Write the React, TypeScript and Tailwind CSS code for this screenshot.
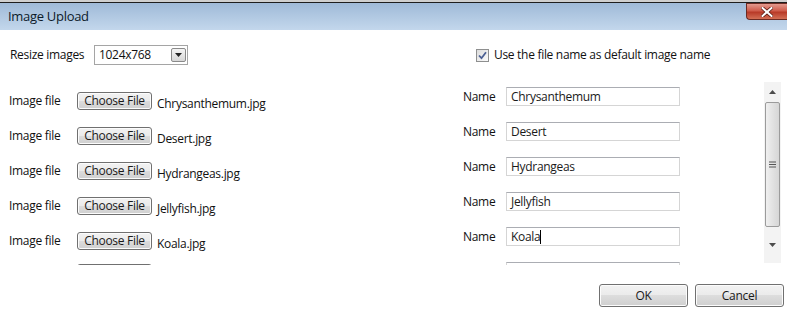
import React from 'react';

const files = [
  { file: 'Chrysanthemum.jpg', name: 'Chrysanthemum' },
  { file: 'Desert.jpg', name: 'Desert' },
  { file: 'Hydrangeas.jpg', name: 'Hydrangeas' },
  { file: 'Jellyfish.jpg', name: 'Jellyfish' },
  { file: 'Koala.jpg', name: 'Koala' },
  { file: '', name: '' },
];

const Win7Button = ({ label, className }: { label: string; className: string }) => (
  <div
    className={`flex items-center justify-center rounded-[3px] border border-[#707070] bg-[linear-gradient(#f2f2f2_0%,#ebebeb_49%,#dddddd_50%,#cfcfcf_100%)] shadow-[inset_0_0_0_1px_#fcfcfc] text-[#1a1a1a] ${className}`}
  >
    {label}
  </div>
);

const TextBox = ({ value, caret }: { value: string; caret?: boolean }) => (
  <div className="flex items-center w-[174px] h-[19px] border border-[#d5d5d5] border-t-[#abadb3] bg-white pl-[4px] text-[#1a1a1a]">
    {value}
    {caret && <span className="inline-block w-px h-[14px] bg-black" />}
  </div>
);

export default function App() {
  return (
    <div className="w-[787px] h-[329px] bg-white overflow-hidden relative font-['Open_Sans',sans-serif] text-[12px] tracking-[-0.3px] text-[#111]">
      {/* Window frame top + caption */}
      <div className="h-[2px] bg-[#cfcfcf]" />
      <div className="h-[1px] bg-[#1e1e1e]" />
      <div className="h-[27px] bg-[linear-gradient(#9fbad8,#c3d7ec)] flex items-center pl-[8px] text-[13px] text-[#0c1a2a]">
        Image Upload
      </div>
      <div className="absolute right-0 top-[3px] w-[41px] h-[17px] rounded-bl-[4px] border border-[#6b2a22] border-r-0 bg-[linear-gradient(#e39a8e_0%,#cf5c4b_45%,#b83a28_55%,#d36f55_100%)] flex items-center justify-center">
        <svg width="12" height="10" viewBox="0 0 12 10">
          <path d="M1.5 1 L10.5 9 M10.5 1 L1.5 9" stroke="#5a1b12" strokeWidth="3.6" strokeLinecap="square" />
          <path d="M1.5 1 L10.5 9 M10.5 1 L1.5 9" stroke="#ffffff" strokeWidth="2" strokeLinecap="square" />
        </svg>
      </div>

      {/* Options row */}
      <div className="flex items-center h-[20px] mt-[15px]">
        <span className="ml-[10px] w-[84px]">Resize images</span>
        <div className="flex items-center justify-between w-[94px] h-[20px] border border-[#a5a5a5] bg-white pl-[4px] pr-[1px]">
          <span>1024x768</span>
          <div className="w-[15px] h-[14px] border border-[#8a8a8a] rounded-[2px] bg-[linear-gradient(#f4f4f4,#d6d6d6)] flex items-center justify-center">
            <svg width="7" height="4" viewBox="0 0 7 4">
              <path d="M0 0 H7 L3.5 4 Z" fill="#222" />
            </svg>
          </div>
        </div>
        <div className="ml-[288px] flex items-center">
          <div className="w-[13px] h-[13px] border border-[#8e8f8f] bg-[linear-gradient(135deg,#dcdcdc,#fbfbfb)] flex items-center justify-center">
            <svg width="9" height="9" viewBox="0 0 9 9">
              <path d="M1 4.5 L3.5 7.2 L8 1.2" stroke="#4b5f93" strokeWidth="1.8" fill="none" />
            </svg>
          </div>
          <span className="ml-[5px]">Use the file name as default image name</span>
        </div>
      </div>

      {/* Scroll area */}
      <div className="mt-[15px] h-[185px] flex overflow-hidden">
        <div className="w-[455px] pt-[12px]">
          {files.map((f, i) => (
            <div key={i} className={`${i === 4 ? 'h-[32px]' : 'h-[35px]'} flex`}>
              <span className="ml-[9px] w-[68px] h-[18px] flex items-center">{f.file ? 'Image file' : ''}</span>
              <Win7Button label={f.file ? 'Choose File' : ''} className="w-[75px] h-[18px]" />
              <span className="ml-[5px] mt-[3px] h-[18px] flex items-center">{f.file}</span>
            </div>
          ))}
        </div>
        <div className="w-[230px] pt-[7px]">
          {files.map((f, i) => (
            <div key={i} className="h-[35px] flex">
              <span className="ml-[8px] w-[43px] h-[19px] flex items-center">{f.name ? 'Name' : ''}</span>
              <TextBox value={f.name} caret={i === 4} />
            </div>
          ))}
        </div>
        <div className="ml-[79px] mt-[2px] w-[17px] h-[181px] bg-[#f3f3f3] flex flex-col items-center">
          <div className="h-[20px] w-full flex items-center justify-center">
            <svg width="7" height="4" viewBox="0 0 7 4">
              <path d="M0 4 H7 L3.5 0 Z" fill="#4d4d4d" />
            </svg>
          </div>
          <div className="w-[15px] h-[125px] rounded-[2px] border border-[#9b9b9b] bg-[linear-gradient(90deg,#f0f0f0,#e2e2e2_50%,#d6d6d6)] flex items-center justify-center">
            <svg width="7" height="7" viewBox="0 0 7 7">
              <path d="M0 1 H7 M0 3.5 H7 M0 6 H7" stroke="#555" strokeWidth="1" />
            </svg>
          </div>
          <div className="flex-1 w-full flex items-center justify-center">
            <svg width="7" height="4" viewBox="0 0 7 4">
              <path d="M0 0 H7 L3.5 4 Z" fill="#4d4d4d" />
            </svg>
          </div>
        </div>
      </div>

      {/* Dialog buttons */}
      <div className="mt-[19px] flex justify-end gap-[7px] pr-[3px]">
        <Win7Button label="OK" className="w-[89px] h-[23px]" />
        <Win7Button label="Cancel" className="w-[89px] h-[23px]" />
      </div>
    </div>
  );
}
